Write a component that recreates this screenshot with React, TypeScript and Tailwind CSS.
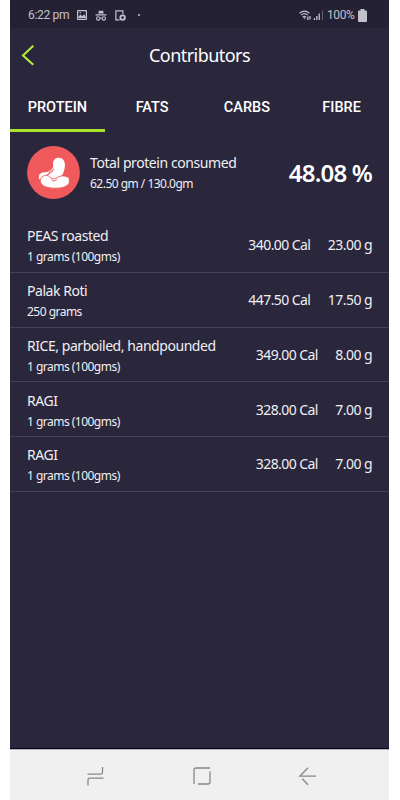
import type { ReactNode } from "react";

type Food = {
  name: string;
  serving: string;
  calories: string;
  amount: string;
};

const TABS = ["PROTEIN", "FATS", "CARBS", "FIBRE"];

const FOODS: Food[] = [
  { name: "PEAS roasted", serving: "1 grams (100gms)", calories: "340.00 Cal", amount: "23.00 g" },
  { name: "Palak Roti", serving: "250 grams", calories: "447.50 Cal", amount: "17.50 g" },
  { name: "RICE, parboiled, handpounded", serving: "1 grams (100gms)", calories: "349.00 Cal", amount: "8.00 g" },
  { name: "RAGI", serving: "1 grams (100gms)", calories: "328.00 Cal", amount: "7.00 g" },
  { name: "RAGI", serving: "1 grams (100gms)", calories: "328.00 Cal", amount: "7.00 g" },
];

function StatusBar() {
  return (
    <div className="flex h-7 shrink-0 items-center bg-[#252134] pt-0.5 pl-[18px] pr-[22px] font-['Roboto',sans-serif] text-[12px] text-[#c3c1cb]">
      <span className="w-[42px] whitespace-nowrap tracking-[-0.3px]">6:22 pm</span>
      <svg className="ml-[7px] h-[10px] w-[10px]" viewBox="0 0 10 10" fill="none">
        <rect x="0.6" y="0.6" width="8.8" height="8.8" rx="0.5" stroke="currentColor" strokeWidth="1.2" />
        <path d="M1.5 8V6.5l2-2 1.7 1.7L7 4.2l1.6 2V8z" fill="currentColor" />
        <circle cx="3.2" cy="2.8" r="0.8" fill="currentColor" />
      </svg>
      <svg className="ml-[8px] h-[11px] w-[12px]" viewBox="0 0 12 11" fill="none">
        <path d="M3.2 3.6 4 .4l2 .5 2-.5.8 3.2zM.6 4.2h10.8v1.3H.6z" fill="currentColor" />
        <circle cx="3.2" cy="8.4" r="1.7" stroke="currentColor" strokeWidth="1.1" />
        <circle cx="8.8" cy="8.4" r="1.7" stroke="currentColor" strokeWidth="1.1" />
        <path d="M5 8h2" stroke="currentColor" />
      </svg>
      <svg className="ml-[8px] h-[11px] w-[11px]" viewBox="0 0 11 11" fill="none">
        <path d="M4.5 9.8H.9V.8h7v3.4" stroke="currentColor" strokeWidth="1.2" />
        <circle cx="7.6" cy="7.6" r="2.3" stroke="currentColor" strokeWidth="1.8" />
      </svg>
      <span className="ml-[11.5px] size-[2px] rounded-full bg-current" />
      <div className="ml-auto flex items-center">
        <svg className="h-[11px] w-[13px]" viewBox="0 0 13 11" fill="none" stroke="currentColor">
          <path d="M.6 3.2Q5.5-.9 10.4 3.2M2.2 5.1Q5.5 2.3 8.8 5.1M3.8 7Q5.5 5.6 7 7" strokeWidth="1.2" />
          <path d="m4.2 7.6 1.3 1.7 1.3-1.7z" fill="currentColor" stroke="none" />
          <path d="M8.8 10V6.5M11 6v3.5" strokeWidth="1.3" />
        </svg>
        <svg className="ml-px h-[10px] w-[11px]" viewBox="0 0 11 10" fill="currentColor">
          <path d="M.8 8h1.3v2H.8zM3.2 6h1.3v4H3.2zM5.6 3.5h1.3V10H5.6z" />
          <path d="M9 .5h1V10H9z" opacity=".4" />
        </svg>
        <span className="ml-[3px] w-[27px] whitespace-nowrap tracking-[-0.4px]">100%</span>
        <svg className="ml-[4px] h-[13px] w-[9px]" viewBox="0 0 9 13" fill="currentColor">
          <path d="M2.5 0h4v1.4H8q1 0 1 1V12q0 1-1 1H1q-1 0-1-1V2.4q0-1 1-1h1.5z" />
        </svg>
      </div>
    </div>
  );
}

function Header() {
  return (
    <header className="grid h-[54px] shrink-0 grid-cols-[40px_1fr_40px] items-center text-white">
      <svg className="ml-[11px] h-[22px] w-[14px]" viewBox="0 0 14 22" fill="none">
        <path d="M12.3 1.8 2 11.5l10.3 9.2" stroke="#b2ee39" strokeWidth="2.1" />
      </svg>
      <h1 className="text-center text-[18px] tracking-[-0.55px]">Contributors</h1>
    </header>
  );
}

function Tabs() {
  return (
    <nav className="grid h-[50px] shrink-0 grid-cols-4 font-['Roboto',sans-serif] text-[14.5px] font-medium text-white">
      {TABS.map((tab, i) => (
        <button
          key={tab}
          className={`border-b-[3px] pt-1 ${i === 0 ? "border-[#a8e32d]" : "border-transparent"}`}
        >
          {tab}
        </button>
      ))}
    </nav>
  );
}

function BeanBadge() {
  return (
    <svg className="size-[53px] shrink-0" viewBox="0 0 53 53">
      <circle cx="26.5" cy="26.5" r="26.4" fill="#f05a5c" />
      <path
        d="M26 17.5c.3-3.8 2.8-5.9 6-5.7 4.2.2 6.2 3.8 5.9 8.4-.3 5-2.4 9.4-5.6 12-2.9 2.2-5 2.2-8.4 2l-9 1c-1.8-1-3.5-2.6-3-5 .5-2.8 3-4.4 6.2-4 2.6.1 5.3-1.4 7.2-3.4 1.2-1.6.8-3.3.7-5.3z"
        fill="#fff"
      />
      <path
        d="M13.4 35.4c-.4-3.8 2.6-6.2 6.6-5.9 2.4.2 3.2 2.9 6.3 3.3 3 .3 4.4-2.3 7.7-2.8 4.8-.6 8.3 1.6 8.3 4.9 0 4.8-5.4 7.1-12.8 7.3-8.5.2-15.6-2-16.1-6.8z"
        fill="#fff"
        stroke="#f05a5c"
        strokeWidth="0.9"
      />
      <path d="M34.5 31.5h7v6h-7z" fill="#fff" />
      <path
        d="M18.7 29.3c3.2-.8 6.8-2.8 8.1-6.8M21.5 27.8c.6-2 2.4-3.2 4.5-3.2M24.3 33.6c1.6 1.8 4 1.6 5.5-.2"
        fill="none"
        stroke="#f05a5c"
        strokeWidth="1"
      />
    </svg>
  );
}

function Summary() {
  return (
    <section className="flex h-[86px] shrink-0 items-start pt-[14px] pl-[17px] pr-[17px] text-white">
      <BeanBadge />
      <div className="ml-[10px] pt-[7px] text-[#f0eff3]">
        <p className="text-[14px] leading-[20px] tracking-[-0.42px]">Total protein consumed</p>
        <p className="text-[12px] leading-[21px] tracking-[-0.52px]">62.50 gm / 130.0gm</p>
      </div>
      <p className="ml-auto pt-[11px] text-[24px] leading-[32px] font-semibold tracking-[-0.8px]">48.08 %</p>
    </section>
  );
}

function FoodRow({ food }: { food: Food }) {
  return (
    <li className="flex h-[54.75px] items-center border-b border-[#45405a] pl-[17px] pr-[17px] text-[#f0eff3]">
      <div className="pt-[3px] whitespace-nowrap">
        <p className="text-[14px] leading-[21px] tracking-[-0.45px]">{food.name}</p>
        <p className="text-[12px] leading-[21px] tracking-[-0.52px]">{food.serving}</p>
      </div>
      <span className="ml-auto text-[14px] tracking-[-0.58px]">{food.calories}</span>
      <span className="ml-[17.5px] text-[14px] tracking-[-0.55px]">{food.amount}</span>
    </li>
  );
}

function NavButton({ children }: { children: ReactNode }) {
  return (
    <svg className="size-[18px] overflow-visible" viewBox="0 0 18 18" fill="none" stroke="#878787" strokeWidth="1.3">
      {children}
    </svg>
  );
}

function SystemNav() {
  return (
    <footer className="flex h-[52px] shrink-0 items-center justify-between border-t border-[#05031c] bg-[#f0f0f0] pt-[2px] pl-[76px] pr-[72px] shadow-[inset_0_1px_0_#b5b3bd]">
      <NavButton>
        <path d="M1.5 7.2h13.3q1.7 0 1.7-1.7V0M17.5 11.2H3.7Q2 11.2 2 12.9v5.6" />
      </NavButton>
      <NavButton>
        <path d="M1 17V3Q1 1 3 1h14M17 4.5V15q0 2-2 2H5" />
      </NavButton>
      <NavButton>
        <path d="M9 .8.9 9.2H17M3.2 11.7 9 17.7" />
      </NavButton>
    </footer>
  );
}

export default function App() {
  return (
    <div className="h-[800px] w-[400px] bg-white pl-[10px]">
      <main className="flex h-full w-[379px] flex-col overflow-hidden bg-[#2a263c] font-['Noto_Sans',sans-serif]">
        <StatusBar />
        <Header />
        <Tabs />
        <Summary />
        <ul className="flex-1">
          {FOODS.map((food, i) => (
            <FoodRow key={i} food={food} />
          ))}
        </ul>
        <SystemNav />
      </main>
    </div>
  );
}
